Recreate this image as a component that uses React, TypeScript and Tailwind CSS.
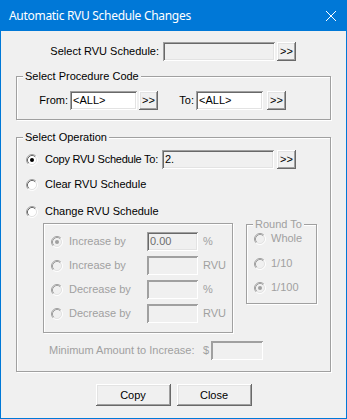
import React from 'react';

const K = 0.7071;

function arc(r: number, tl: boolean) {
  const a = (6 - K * r).toFixed(2);
  const b = (6 + K * r).toFixed(2);
  return tl ? `M${a} ${b} A${r} ${r} 0 0 1 ${b} ${a}` : `M${b} ${a} A${r} ${r} 0 0 1 ${a} ${b}`;
}

function Radio({ checked = false, disabled = false }: { checked?: boolean; disabled?: boolean }) {
  return (
    <svg width="12" height="12" viewBox="0 0 12 12" className="shrink-0">
      <circle cx="6" cy="6" r="4.5" fill={disabled ? '#f0f0f0' : '#ffffff'} />
      <path d={arc(5.5, true)} stroke="#a0a0a0" fill="none" />
      <path d={arc(5.5, false)} stroke="#ffffff" fill="none" />
      <path d={arc(4.5, true)} stroke={disabled ? '#a0a0a0' : '#696969'} fill="none" />
      <path d={arc(4.5, false)} stroke="#e3e3e3" fill="none" />
      {checked && <circle cx="6" cy="6" r="2" fill={disabled ? '#a0a0a0' : '#000000'} />}
    </svg>
  );
}

const sunken =
  'shadow-[inset_1px_1px_0_#a0a0a0,inset_-1px_-1px_0_#ffffff,inset_2px_2px_0_#696969,inset_-2px_-2px_0_#e3e3e3]';
const sunkenOff =
  'shadow-[inset_1px_1px_0_#a0a0a0,inset_-1px_-1px_0_#ffffff,inset_2px_2px_0_#a0a0a0,inset_-2px_-2px_0_#f0f0f0]';
const raised =
  'shadow-[inset_-1px_-1px_0_#696969,inset_1px_1px_0_#ffffff,inset_-2px_-2px_0_#a0a0a0,inset_2px_2px_0_#e3e3e3]';
const etched = 'border border-[#a0a0a0] shadow-[inset_1px_1px_0_#ffffff,1px_1px_0_#ffffff]';

function Field({ w, value = '', white = false, off = false, dim = false }: { w: string; value?: string; white?: boolean; off?: boolean; dim?: boolean }) {
  return (
    <div
      className={`${w} h-[19px] shrink-0 flex items-center pl-[3px] ${white ? 'bg-white' : 'bg-[#f0f0f0]'} ${off ? sunkenOff : sunken} ${dim ? 'text-[#6d6d6d]' : 'text-black'}`}
    >
      {value}
    </div>
  );
}

function MoreBtn() {
  return (
    <div className={`w-[19px] h-[19px] shrink-0 flex items-center justify-center pb-[1px] bg-[#f0f0f0] ${raised}`}>
      &gt;&gt;
    </div>
  );
}

function Caption({ text, off = false }: { text: string; off?: boolean }) {
  return (
    <span className={`block w-fit -mt-[7px] ml-[6px] px-[2px] bg-[#f0f0f0] leading-[13px] ${off ? 'text-[#a0a0a0]' : ''}`}>
      {text}
    </span>
  );
}

export default function App() {
  const changeRows = [
    { label: 'Increase by', unit: '%', checked: true, value: '0.00' },
    { label: 'Increase by', unit: 'RVU' },
    { label: 'Decrease by', unit: '%' },
    { label: 'Decrease by', unit: 'RVU' },
  ];

  return (
    <div className="w-[347px] h-[419px] flex flex-col bg-[#f0f0f0] border border-t-0 border-[#0078d7] font-['Liberation_Sans',Arial,sans-serif] text-[11px] leading-[13px] text-black">
      {/* title bar */}
      <div className="h-[31px] shrink-0 flex items-center bg-[#0078d7] pl-[8px] text-white">
        <span className="font-['Noto_Sans',sans-serif] text-[12px] tracking-[-0.3px]">Automatic RVU Schedule Changes</span>
        <svg width="10" height="10" viewBox="0 0 10 10" className="ml-auto mr-[10px]">
          <path d="M0 0 L10 10 M10 0 L0 10" stroke="#ffffff" strokeWidth="1" />
        </svg>
      </div>

      <div className="flex-1 flex flex-col">
        {/* schedule selector */}
        <div className="mt-[11px] flex items-center h-[19px]">
          <span className="w-[158px] text-right">Select RVU Schedule:</span>
          <div className="ml-[4px]"><Field w="w-[112px]" /></div>
          <div className="ml-[2px]"><MoreBtn /></div>
        </div>

        {/* procedure code */}
        <div className={`mt-[15px] ml-[15px] w-[315px] pb-[9px] ${etched}`}>
          <Caption text="Select Procedure Code" />
          <div className="mt-[8px] flex items-center h-[19px]">
            <span className="w-[51px] text-right">From:</span>
            <div className="ml-[2px]"><Field w="w-[67px]" value="<ALL>" white /></div>
            <div className="ml-[2px]"><MoreBtn /></div>
            <span className="w-[36px] text-right">To:</span>
            <div className="ml-[2px]"><Field w="w-[67px]" value="<ALL>" white /></div>
            <div className="ml-[4px]"><MoreBtn /></div>
          </div>
        </div>

        {/* operation */}
        <div className={`mt-[17px] ml-[15px] w-[315px] pb-[11px] ${etched}`}>
          <Caption text="Select Operation" />
          <div className="mt-[6px] flex items-center h-[19px] pl-[9px]">
            <Radio checked />
            <span className="ml-[7px] w-[117px] whitespace-nowrap tracking-[-0.25px]">Copy RVU Schedule To:</span>
            <Field w="w-[112px]" value="2." />
            <div className="ml-[3px]"><MoreBtn /></div>
          </div>
          <div className="mt-[6px] flex items-center h-[19px] pl-[9px]">
            <Radio />
            <span className="ml-[7px]">Clear RVU Schedule</span>
          </div>
          <div className="mt-[8px] flex items-center h-[19px] pl-[9px]">
            <Radio />
            <span className="ml-[7px]">Change RVU Schedule</span>
          </div>

          <div className="flex items-start">
            <div className={`mt-[2px] ml-[26px] w-[190px] pt-[8px] pb-[9px] flex flex-col gap-[5px] text-[#a0a0a0] ${etched}`}>
              {changeRows.map((r, i) => (
                <div key={i} className="flex items-center h-[19px] pl-[7px]">
                  <Radio disabled checked={r.checked} />
                  <span className="ml-[6px] w-[78px]">{r.label}</span>
                  <Field w="w-[51px]" value={r.value} off={!r.value} dim />
                  <span className="ml-[5px]">{r.unit}</span>
                </div>
              ))}
            </div>

            <div className={`mt-[3px] ml-[13px] w-[71px] pb-[9px] text-[#a0a0a0] ${etched}`}>
              <Caption text="Round To" off />
              <div className="mt-[1px] flex items-center h-[13px] pl-[7px]">
                <Radio disabled />
                <span className="ml-[5px]">Whole</span>
              </div>
              <div className="mt-[12px] flex items-center h-[13px] pl-[7px]">
                <Radio disabled />
                <span className="ml-[5px]">1/10</span>
              </div>
              <div className="mt-[11px] flex items-center h-[13px] pl-[7px]">
                <Radio disabled checked />
                <span className="ml-[5px]">1/100</span>
              </div>
            </div>
          </div>

          <div className="mt-[8px] flex items-center h-[19px] pl-[32px] text-[#a0a0a0]">
            <span className="w-[154px] whitespace-nowrap">Minimum Amount to Increase:</span>
            <span className="w-[8px]">$</span>
            <Field w="w-[52px]" off />
          </div>
        </div>

        {/* buttons */}
        <div className="mt-[12px] flex justify-center gap-[6px]">
          <div className={`w-[75px] h-[22px] flex items-center justify-center bg-[#f0f0f0] ${raised}`}>Copy</div>
          <div className={`w-[75px] h-[22px] flex items-center justify-center bg-[#f0f0f0] ${raised}`}>Close</div>
        </div>
      </div>
    </div>
  );
}
